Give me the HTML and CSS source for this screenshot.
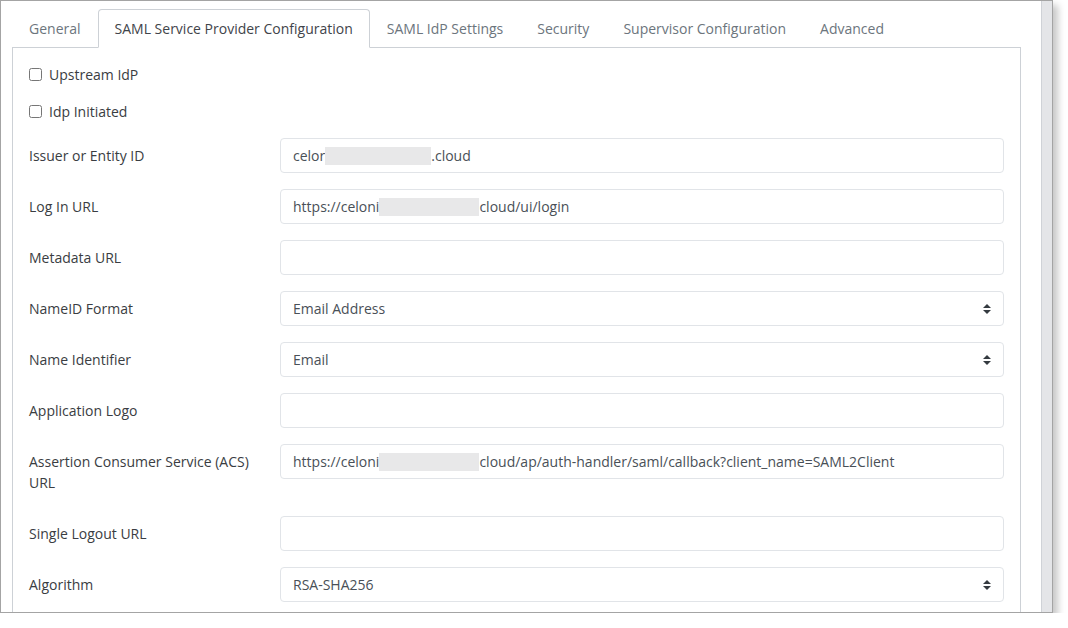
FILE: index.html
```html
<!DOCTYPE html>
<html>
<head>
<meta charset="utf-8">
<link rel="stylesheet" href="styles.css">
</head>
<body>
<div class="window">
  <div class="main">
    <ul class="tabs">
      <li class="tab">General</li>
      <li class="tab active">SAML Service Provider Configuration</li>
      <li class="tab">SAML IdP Settings</li>
      <li class="tab">Security</li>
      <li class="tab">Supervisor Configuration</li>
      <li class="tab">Advanced</li>
    </ul>
    <div class="panel">
      <label class="check"><input type="checkbox"><span>Upstream IdP</span></label>
      <label class="check"><input type="checkbox"><span>Idp Initiated</span></label>

      <div class="row">
        <div class="label">Issuer or Entity ID</div>
        <div class="field">celor<span class="redact r1"></span>.cloud</div>
      </div>
      <div class="row">
        <div class="label">Log In URL</div>
        <div class="field">https://celoni<span class="redact r2"></span>cloud/ui/login</div>
      </div>
      <div class="row">
        <div class="label">Metadata URL</div>
        <div class="field"></div>
      </div>
      <div class="row">
        <div class="label">NameID Format</div>
        <div class="field select"><span>Email Address</span><svg class="caret" width="8" height="10" viewBox="0 0 4 5"><path d="M2 0L0 2h4zm0 5L0 3h4z" fill="#343a40"/></svg></div>
      </div>
      <div class="row">
        <div class="label">Name Identifier</div>
        <div class="field select"><span>Email</span><svg class="caret" width="8" height="10" viewBox="0 0 4 5"><path d="M2 0L0 2h4zm0 5L0 3h4z" fill="#343a40"/></svg></div>
      </div>
      <div class="row">
        <div class="label">Application Logo</div>
        <div class="field"></div>
      </div>
      <div class="row">
        <div class="label">Assertion Consumer Service (ACS) URL</div>
        <div class="field">https://celoni<span class="redact r2"></span>cloud/ap/auth-handler/saml/callback?client_name=SAML2Client</div>
      </div>
      <div class="row">
        <div class="label">Single Logout URL</div>
        <div class="field"></div>
      </div>
      <div class="row">
        <div class="label">Algorithm</div>
        <div class="field select"><span>RSA-SHA256</span><svg class="caret" width="8" height="10" viewBox="0 0 4 5"><path d="M2 0L0 2h4zm0 5L0 3h4z" fill="#343a40"/></svg></div>
      </div>
    </div>
  </div>
  <div class="scrollbar"></div>
</div>
</body>
</html>
```

FILE: styles.css
```css
* { box-sizing: border-box; }
html, body { margin: 0; padding: 0; background: #fff; }
body {
  font-family: "Open Sans", "Liberation Sans", sans-serif;
  font-size: 14px;
  line-height: 21px;
  color: #3a3d42;
}
.window {
  width: 1053px;
  height: 613px;
  border: 1px solid #a4a4a4;
  box-shadow: 5px 5px 7px rgba(0, 0, 0, 0.22);
  display: flex;
  overflow: hidden;
  background: #fff;
}
.main {
  flex: 1;
  padding: 8px 20px 0 11px;
  overflow: hidden;
}
.scrollbar {
  width: 11px;
  background: #e4e5e8;
  border-left: 1px solid #cfd2d7;
}
.tabs {
  list-style: none;
  margin: 0;
  padding: 0;
  display: flex;
}
.tab {
  padding: 8px 16px;
  border: 1px solid transparent;
  border-radius: 4px 4px 0 0;
  margin-bottom: -1px;
  color: #6c757d;
  white-space: nowrap;
}
.tab.active {
  position: relative;
  z-index: 1;
  color: #3f444a;
  background: #fff;
  border-color: #cdd1d6 #cdd1d6 #fff;
}
.panel {
  width: 1009px;
  border: 1px solid #cdd1d6;
  padding: 16px 16px 16px 16px;
  display: flex;
  flex-direction: column;
}
.check {
  display: flex;
  align-items: flex-start;
  margin-bottom: 16px;
  color: #3a3d42;
}
.check input {
  width: 13px;
  height: 13px;
  margin: 4px 7px 0 0;
}
.row {
  display: grid;
  grid-template-columns: 236px 1fr;
  column-gap: 15px;
  margin-bottom: 16px;
}
.label {
  padding: 7px 0;
  color: #3a3d42;
}
.field {
  height: 35px;
  border: 1px solid #e1e4e8;
  border-radius: 4px;
  padding: 6px 12px;
  color: #495057;
  white-space: nowrap;
  overflow: hidden;
  display: flex;
  align-items: center;
}
.select {
  justify-content: space-between;
  padding-right: 12px;
}
.caret { flex: none; }
.redact {
  display: inline-block;
  height: 18px;
  background: #e8e8e9;
}
.r1 { width: 106px; }
.r2 { width: 100px; }
```
